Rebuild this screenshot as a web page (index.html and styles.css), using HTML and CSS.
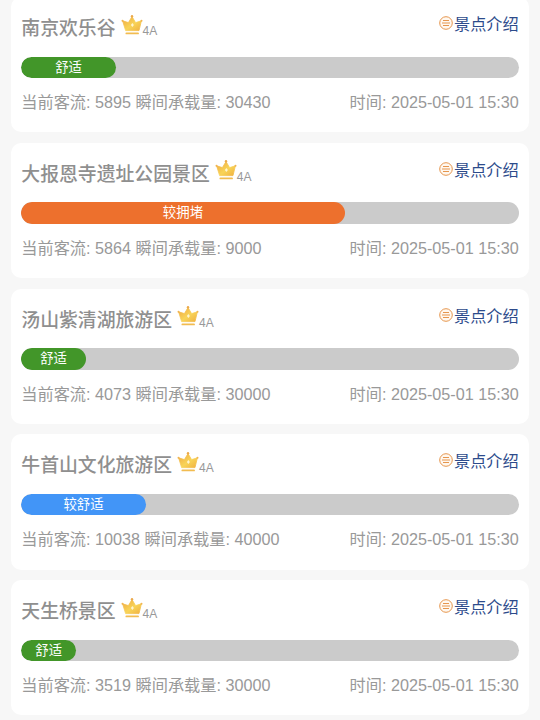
FILE: index.html
```html
<!DOCTYPE html>
<html lang="zh-CN">
<head>
  <meta charset="UTF-8">
  <meta name="viewport" content="width=device-width, initial-scale=1">
  <title>景区客流</title>
  <link rel="stylesheet" href="styles.css">
</head>

<body>

  <svg class="defs" width="0" height="0">
    <defs>
      <linearGradient id="gold" x1="0" y1="0" x2="1" y2="1">
        <stop offset="0" stop-color="#efa640"/>
        <stop offset="0.55" stop-color="#f8d458"/>
        <stop offset="1" stop-color="#f0b040"/>
      </linearGradient>
      <symbol id="crown" viewBox="0 0 22 22">
        <path d="M1.6 6.8 L7.4 8.6 L11 2.6 L14.6 8.6 L20.4 6.8 L18 16.6 H4.6 Z" fill="url(#gold)" stroke="url(#gold)" stroke-width="0.8" stroke-linejoin="round"/>
        <path d="M5.4 19.4 H17" stroke="#f2bc50" stroke-width="1.9" stroke-linecap="round"/>
        <circle cx="11" cy="2.2" r="1.2" fill="#eba94c"/>
        <circle cx="1.5" cy="6.8" r="1" fill="#f0b451"/>
        <circle cx="20.5" cy="6.8" r="1" fill="#f0b451"/>
        <path d="M11.4 9 L12.9 11 L11.4 13 L9.9 11 Z" fill="#fff5d0"/>
      </symbol>
      <symbol id="detail" viewBox="0 0 14 14">
        <circle cx="7" cy="7" r="6.3" fill="#fff8f0" stroke="#e6964e" stroke-width="1"/>
        <path d="M4 4.5 H10 M3 7 H11 M4 9.5 H10" stroke="#e6964e" stroke-width="1"/>
      </symbol>
    </defs>
  </svg>

  <div class="list">
    <div class="card">
      <div class="card-head">
        <div class="name">南京欢乐谷</div>
        <svg class="crown"><use href="#crown"/></svg>
        <span class="level">4A</span>
        <a class="intro"><svg><use href="#detail"/></svg>景点介绍</a>
      </div>
      <div class="bar"><div class="fill green" style="width: 19%">舒适</div></div>
      <div class="info"><span>当前客流: 5895 瞬间承载量: 30430</span><span>时间: 2025-05-01 15:30</span></div>
    </div>

    <div class="card">
      <div class="card-head">
        <div class="name">大报恩寺遗址公园景区</div>
        <svg class="crown"><use href="#crown"/></svg>
        <span class="level">4A</span>
        <a class="intro"><svg><use href="#detail"/></svg>景点介绍</a>
      </div>
      <div class="bar"><div class="fill orange" style="width: 65%">较拥堵</div></div>
      <div class="info"><span>当前客流: 5864 瞬间承载量: 9000</span><span>时间: 2025-05-01 15:30</span></div>
    </div>

    <div class="card">
      <div class="card-head">
        <div class="name">汤山紫清湖旅游区</div>
        <svg class="crown"><use href="#crown"/></svg>
        <span class="level">4A</span>
        <a class="intro"><svg><use href="#detail"/></svg>景点介绍</a>
      </div>
      <div class="bar"><div class="fill green" style="width: 13%">舒适</div></div>
      <div class="info"><span>当前客流: 4073 瞬间承载量: 30000</span><span>时间: 2025-05-01 15:30</span></div>
    </div>

    <div class="card">
      <div class="card-head">
        <div class="name">牛首山文化旅游区</div>
        <svg class="crown"><use href="#crown"/></svg>
        <span class="level">4A</span>
        <a class="intro"><svg><use href="#detail"/></svg>景点介绍</a>
      </div>
      <div class="bar"><div class="fill blue" style="width: 25%">较舒适</div></div>
      <div class="info"><span>当前客流: 10038 瞬间承载量: 40000</span><span>时间: 2025-05-01 15:30</span></div>
    </div>

    <div class="card">
      <div class="card-head">
        <div class="name">天生桥景区</div>
        <svg class="crown"><use href="#crown"/></svg>
        <span class="level">4A</span>
        <a class="intro"><svg><use href="#detail"/></svg>景点介绍</a>
      </div>
      <div class="bar"><div class="fill green" style="width: 11%">舒适</div></div>
      <div class="info"><span>当前客流: 3519 瞬间承载量: 30000</span><span>时间: 2025-05-01 15:30</span></div>
    </div>
  </div>

</body>
</html>
```

FILE: styles.css
```css
* { margin: 0; padding: 0; box-sizing: border-box; }

body {
  height: 720px;
  overflow: hidden;
  background: #f7f7f7;
  color: #999;
  font-family: "Liberation Sans", "Noto Sans CJK SC", sans-serif;
}

.defs {
  display: block;
}

/* the list is scrolled a little, so the first card starts above the screen */
.list {
  display: flex;
  flex-direction: column;
  gap: 10.6px;
  margin-top: -3px;
  padding: 0 10.8px;
}

.card {
  height: 135.2px;
  flex: none;
  padding: 13px 10.5px 0;
  background: #fff;
  border-radius: 10px;
}

.card-head {
  display: flex;
  align-items: flex-start;
  height: 46.5px;
}

.name {
  font-size: 18.85px;
  font-weight: 500;
  line-height: 38px;
  color: #8f8f8f;
}

.crown {
  width: 22px;
  height: 22px;
  margin: 3.5px 0 0 5px;
}

.level {
  font-size: 12px;
  line-height: 14px;
  margin-top: 14px;
}

.intro {
  display: flex;
  align-items: center;
  margin-left: auto;
  font-size: 16.2px;
  line-height: 28px;
  color: #2d4b8b;
}

.intro svg {
  width: 14px;
  height: 14px;
  margin: -2px 1px 0 0;
}

.bar {
  height: 21.6px;
  background: #cbcbcb;
  border-radius: 11px;
  overflow: hidden;
}

.fill {
  height: 100%;
  border-radius: 11px;
  color: #fff;
  font-size: 13.4px;
  line-height: 21px;
  text-align: center;
}

.green { background: #429629; }
.orange { background: #ed702d; }
.blue { background: #4295f7; }

.info {
  display: flex;
  justify-content: space-between;
  margin-top: 12px;
  font-size: 16.2px;
  line-height: 24px;
  white-space: nowrap;
}
```
